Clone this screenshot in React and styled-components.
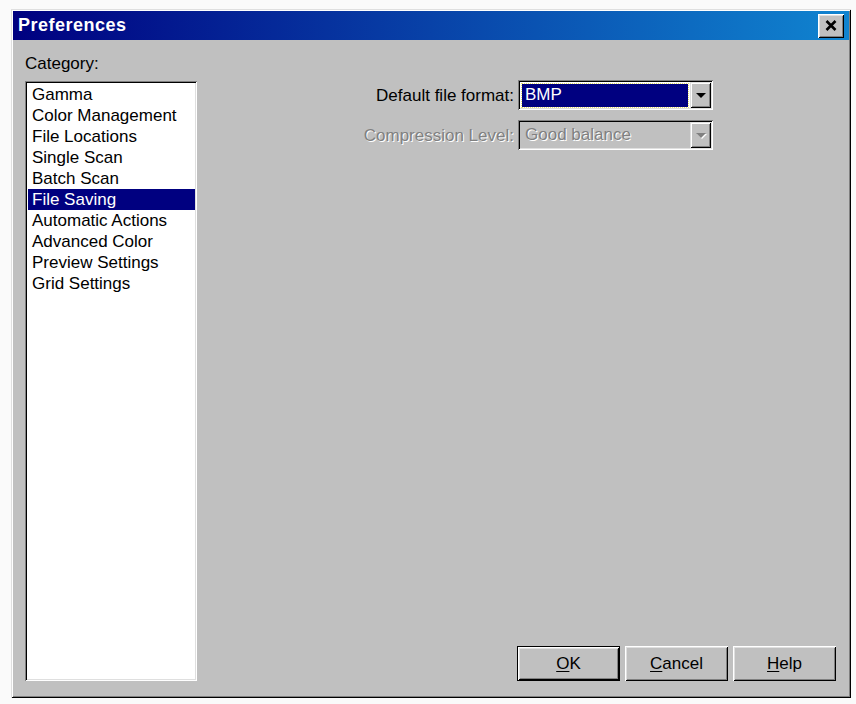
import React from "react";
import styled, { createGlobalStyle } from "styled-components";

const GlobalStyle = createGlobalStyle`
  html, body {
    margin: 0;
    padding: 0;
    background: #fafafa;
  }
  body {
    font-family: "Liberation Sans", Arial, sans-serif;
    font-size: 17px;
  }
`;

const categories = [
  "Gamma",
  "Color Management",
  "File Locations",
  "Single Scan",
  "Batch Scan",
  "File Saving",
  "Automatic Actions",
  "Advanced Color",
  "Preview Settings",
  "Grid Settings",
];

const Window = styled.div`
  box-sizing: border-box;
  margin: 9px 0 0 11px;
  width: 840px;
  height: 689px;
  padding: 2px;
  background: #c0c0c0;
  display: flex;
  flex-direction: column;
  box-shadow: inset 1px 1px #dfdfdf, inset -1px -1px #000,
    inset 2px 2px #fff, inset -2px -2px #808080;
`;

const TitleBar = styled.div`
  height: 29px;
  display: flex;
  align-items: center;
  justify-content: space-between;
  padding: 0 5px 0 5px;
  background: linear-gradient(to right, #000080, #1084d0);
`;

const Title = styled.span`
  color: #fff;
  font-weight: bold;
  font-size: 18px;
  letter-spacing: 0.5px;
`;

const CloseButton = styled.div`
  box-sizing: border-box;
  width: 26px;
  height: 24px;
  background: #c0c0c0;
  display: flex;
  align-items: center;
  justify-content: center;
  box-shadow: inset 1px 1px #fff, inset -1px -1px #000,
    inset 2px 2px #dfdfdf, inset -2px -2px #808080;
`;

const Body = styled.div`
  flex: 1;
  display: flex;
  padding: 13px 13px 15px 12px;
  min-height: 0;
`;

const LeftColumn = styled.div`
  width: 172px;
  display: flex;
  flex-direction: column;
`;

const Label = styled.div`
  line-height: 21px;
  color: ${(p) => (p.disabled ? "#808080" : "#000")};
  text-shadow: ${(p) => (p.disabled ? "1px 1px #fff" : "none")};
  text-align: ${(p) => p.align || "left"};
  white-space: nowrap;
`;

const ListBox = styled.div`
  flex: 1;
  margin-top: 7px;
  background: #fff;
  padding: 3px 2px 2px 3px;
  box-shadow: inset 1px 1px #808080, inset -1px -1px #fff,
    inset 2px 2px #000, inset -2px -2px #dfdfdf;
`;

const ListItem = styled.div`
  height: 21px;
  line-height: 21px;
  padding-left: 4px;
  white-space: nowrap;
  background: ${(p) => (p.selected ? "#000080" : "transparent")};
  color: ${(p) => (p.selected ? "#fff" : "#000")};
`;

const RightColumn = styled.div`
  flex: 1;
  display: flex;
  flex-direction: column;
`;

const Form = styled.div`
  margin-top: 27px;
  display: grid;
  grid-template-columns: 317px 195px;
  column-gap: 4px;
  row-gap: 10px;
  align-items: center;
`;

const Combo = styled.div`
  box-sizing: border-box;
  height: 30px;
  padding: 2px;
  display: flex;
  background: ${(p) => (p.disabled ? "#c0c0c0" : "#fff")};
  box-shadow: inset 1px 1px #808080, inset -1px -1px #fff,
    inset 2px 2px #000, inset -2px -2px #dfdfdf;
`;

const ComboValue = styled.div`
  flex: 1;
  margin: 2px 2px 1px 2px;
  padding-left: 3px;
  line-height: 21px;
  background: ${(p) => (p.focused ? "#000080" : "transparent")};
  color: ${(p) => (p.disabled ? "#808080" : p.focused ? "#fff" : "#000")};
  text-shadow: ${(p) => (p.disabled ? "1px 1px #fff" : "none")};
  outline: ${(p) => (p.focused ? "1px dotted #e8e070" : "none")};
`;

const ArrowButton = styled.div`
  box-sizing: border-box;
  width: 21px;
  display: flex;
  align-items: center;
  justify-content: center;
  background: #c0c0c0;
  box-shadow: inset 1px 1px #dfdfdf, inset -1px -1px #000,
    inset 2px 2px #fff, inset -2px -2px #808080;
`;

const Arrow = styled.span`
  width: 0;
  height: 0;
  border-left: 5px solid transparent;
  border-right: 5px solid transparent;
  border-top: 5px solid ${(p) => (p.disabled ? "#808080" : "#000")};
  filter: ${(p) => (p.disabled ? "drop-shadow(1px 1px 0 #fff)" : "none")};
`;

const ButtonRow = styled.div`
  margin-top: auto;
  display: flex;
  justify-content: flex-end;
  gap: 5px;
`;

const Button = styled.div`
  box-sizing: border-box;
  width: 103px;
  height: 35px;
  display: flex;
  align-items: center;
  justify-content: center;
  background: #c0c0c0;
  color: #000;
  box-shadow: ${(p) =>
    p.isDefault
      ? "inset 0 0 0 1px #000, inset 2px 2px #fff, inset -2px -2px #000, inset 3px 3px #dfdfdf, inset -3px -3px #808080"
      : "inset 1px 1px #fff, inset -1px -1px #000, inset 2px 2px #dfdfdf, inset -2px -2px #808080"};
  u {
    text-decoration: underline;
    text-underline-offset: 2px;
  }
`;

const CloseIcon = () => (
  <svg width="12" height="11" viewBox="0 0 12 11">
    <path d="M1.5 1 L10.5 10 M10.5 1 L1.5 10" stroke="#000" strokeWidth="2.6" />
  </svg>
);

const ComboBox = ({ value, focused, disabled }) => (
  <Combo disabled={disabled}>
    <ComboValue focused={focused} disabled={disabled}>
      {value}
    </ComboValue>
    <ArrowButton>
      <Arrow disabled={disabled} />
    </ArrowButton>
  </Combo>
);

export default function App() {
  return (
    <>
      <GlobalStyle />
      <Window>
        <TitleBar>
          <Title>Preferences</Title>
          <CloseButton>
            <CloseIcon />
          </CloseButton>
        </TitleBar>
        <Body>
          <LeftColumn>
            <Label>Category:</Label>
            <ListBox>
              {categories.map((c) => (
                <ListItem key={c} selected={c === "File Saving"}>
                  {c}
                </ListItem>
              ))}
            </ListBox>
          </LeftColumn>
          <RightColumn>
            <Form>
              <Label align="right">Default file format:</Label>
              <ComboBox value="BMP" focused />
              <Label align="right" disabled>
                Compression Level:
              </Label>
              <ComboBox value="Good balance" disabled />
            </Form>
            <ButtonRow>
              <Button isDefault>
                <span>
                  <u>O</u>K
                </span>
              </Button>
              <Button>
                <span>
                  <u>C</u>ancel
                </span>
              </Button>
              <Button>
                <span>
                  <u>H</u>elp
                </span>
              </Button>
            </ButtonRow>
          </RightColumn>
        </Body>
      </Window>
    </>
  );
}
